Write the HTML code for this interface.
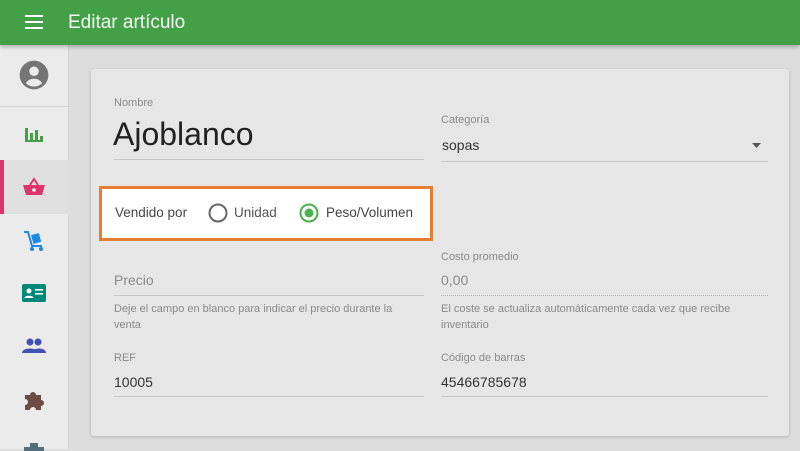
<!DOCTYPE html>
<html><head><meta charset="utf-8"><style>
*{margin:0;padding:0;box-sizing:border-box}
body{width:800px;height:449px;overflow:hidden;background:#dddddd;font-family:"Liberation Sans",sans-serif;position:relative}
.hdr{position:absolute;left:0;top:0;width:800px;height:45px;background:#43a047;box-shadow:0 2px 4px rgba(0,0,0,.25);z-index:2}
.hdr .t{position:absolute;left:68px;top:12px;color:#fff;font-size:19px;opacity:.95}
.side{position:absolute;left:0;top:45px;width:69px;height:404px;background:#ebebeb;border-right:1px solid #d4d4d4}
.ic{position:absolute;left:22px}
.card{position:absolute;left:91px;top:69px;width:698px;height:367px;background:#e6e6e6;border-radius:3px;box-shadow:0 1px 3px rgba(0,0,0,.2)}
.a{position:absolute;font-size:12px;color:#8a8a8a}
.v{position:absolute;font-size:14px;color:#333}
.ln{position:absolute;height:1px;background:#c8c8c8}
</style></head><body>
<div class="hdr">
<svg style="position:absolute;left:25px;top:15px" width="18" height="14"><rect y="0" width="18" height="2" fill="#fff"/><rect y="6" width="18" height="2" fill="#fff"/><rect y="12" width="18" height="2" fill="#fff"/></svg>
<div class="t">Editar artículo</div></div>
<div class="side">
<div style="position:absolute;left:0;top:61px;width:69px;height:1px;background:#d6d6d6"></div>
<div style="position:absolute;left:0;top:115px;width:69px;height:54px;background:#e0e0e0"></div>
<div style="position:absolute;left:0;top:115px;width:4px;height:54px;background:#e0336e"></div>
<svg style="position:absolute;left:19px;top:15px" width="30" height="30" viewBox="0 0 24 24"><circle cx="12" cy="12" r="11.5" fill="#757575"/><circle cx="12" cy="9" r="3.8" fill="#ebebeb"/><path d="M5.5 18.5c1.5-2.5 4-3.5 6.5-3.5s5 1 6.5 3.5A9 9 0 0 1 5.5 18.5z" fill="#ebebeb"/></svg>
<svg class="ic" style="top:80px" width="24" height="20"><rect x="3" y="3" width="3" height="14" fill="#43a047"/><rect x="8" y="8" width="3" height="9" fill="#43a047"/><rect x="13" y="5" width="3" height="12" fill="#43a047"/><rect x="18" y="11" width="3" height="6" fill="#43a047"/><rect x="3" y="15" width="18" height="2" fill="#43a047"/></svg>
<svg class="ic" style="top:132px" width="24" height="20"><path d="M8 8l4-6 4 6" stroke="#e0336e" stroke-width="2" fill="none"/><path d="M1 8h22l-3 10H4z" fill="#e0336e"/><circle cx="12" cy="13" r="1.8" fill="#fff"/></svg>
<svg class="ic" style="top:184px" width="24" height="24"><path d="M2 3h4l4 14h10" stroke="#1e88e5" stroke-width="2" fill="none"/><rect x="10" y="5" width="8" height="9" fill="#1e88e5" transform="rotate(-15 14 9)"/><circle cx="10" cy="20" r="2" fill="#1e88e5"/><circle cx="19" cy="20" r="2" fill="#1e88e5"/></svg>
<svg class="ic" style="top:238px" width="24" height="20"><rect x="0" y="1" width="24" height="18" rx="2" fill="#00897b"/><circle cx="7" cy="8" r="2.5" fill="#fff"/><path d="M2.5 15c0-3 9-3 9 0z" fill="#fff"/><rect x="13" y="6" width="8" height="1.6" fill="#fff"/><rect x="13" y="10" width="8" height="1.6" fill="#fff"/></svg>
<svg class="ic" style="top:292px" width="24" height="18"><circle cx="8" cy="5" r="3.5" fill="#3f51b5"/><circle cx="16" cy="5" r="3.5" fill="#3f51b5"/><path d="M0 16c0-6 16-6 16 0z" fill="#3f51b5"/><path d="M10 16c0-6 14-6 14 0z" fill="#3f51b5"/></svg>
<svg class="ic" style="top:343px" width="24" height="24"><path d="M3 7h5a3 3 0 0 1 6 0h5v5a3 3 0 0 1 0 6v4H14a3 3 0 0 0-6 0H3v-5a3 3 0 0 0 0-6z" fill="#6d4c41"/></svg>
<svg class="ic" style="top:394px" width="24" height="12"><rect x="8" y="4" width="8" height="8" fill="#546e7a"/><rect x="2" y="8" width="20" height="4" fill="#546e7a"/></svg>
</div>
<div class="card">
<div class="a" style="left:23px;top:28px;font-size:11px">Nombre</div>
<div class="v" style="left:22px;top:47px;font-size:32px;color:#222">Ajoblanco</div>
<div class="ln" style="left:23px;top:90px;width:310px"></div>
<div class="a" style="left:350px;top:45px;font-size:11px">Categoría</div>
<div class="v" style="left:351px;top:68px">sopas</div>
<svg style="position:absolute;left:661px;top:74px" width="9" height="5"><path d="M0 0h9L4.5 5z" fill="#555"/></svg>
<div class="ln" style="left:350px;top:92px;width:327px"></div>
<div style="position:absolute;left:8px;top:117px;width:334px;height:55px;background:#fff;border:3px solid #e67e32"></div>
<div class="v" style="left:24px;top:136px;color:#444;font-size:13.5px">Vendido por</div>
<svg style="position:absolute;left:117px;top:134px" width="20" height="20"><circle cx="10" cy="10" r="8.5" stroke="#666" stroke-width="2" fill="none"/></svg>
<div class="v" style="left:143px;top:136px;color:#555;font-size:13.5px">Unidad</div>
<svg style="position:absolute;left:208px;top:134px" width="20" height="20"><circle cx="10" cy="10" r="8.5" stroke="#4caf50" stroke-width="2" fill="none"/><circle cx="10" cy="10" r="4.5" fill="#4caf50"/></svg>
<div class="v" style="left:235px;top:136px;color:#444;font-size:13.5px">Peso/Volumen</div>
<div class="v" style="left:23px;top:203px;color:#8a8a8a">Precio</div>
<div class="ln" style="left:23px;top:226px;width:310px"></div>
<div class="a" style="left:23px;top:232px;font-size:11px;line-height:16px;width:300px">Deje el campo en blanco para indicar el precio durante la venta</div>
<div class="a" style="left:350px;top:182px;font-size:11px">Costo promedio</div>
<div class="v" style="left:350px;top:203px;color:#8a8a8a">0,00</div>
<div style="position:absolute;left:350px;top:226px;width:327px;border-top:1px dotted #b0b0b0"></div>
<div class="a" style="left:350px;top:232px;font-size:11px;line-height:16px;width:330px">El coste se actualiza automáticamente cada vez que recibe inventario</div>
<div class="a" style="left:23px;top:283px;font-size:11px">REF</div>
<div class="v" style="left:23px;top:305px">10005</div>
<div class="ln" style="left:23px;top:327px;width:310px"></div>
<div class="a" style="left:350px;top:283px;font-size:11px">Código de barras</div>
<div class="v" style="left:350px;top:305px">45466785678</div>
<div class="ln" style="left:350px;top:327px;width:327px"></div>
</div>
</body></html>
